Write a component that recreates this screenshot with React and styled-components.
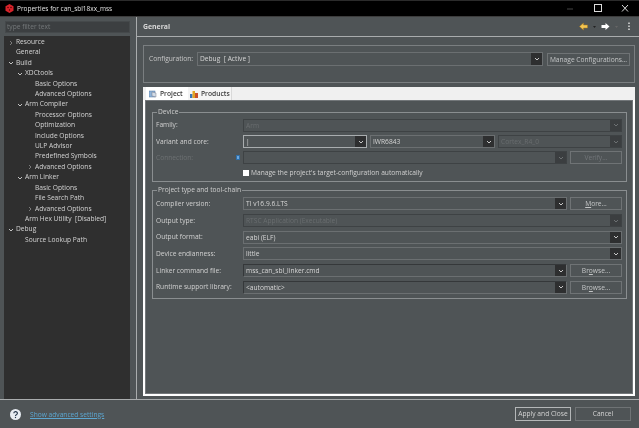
import React from 'react';
import styled, { createGlobalStyle } from 'styled-components';

const Global = createGlobalStyle`
  html, body { margin: 0; padding: 0; background: #4f5456; }
  * { box-sizing: border-box; }
  #root { width: 639px; height: 428px; overflow: hidden; }
`;

const Window = styled.div`
  width: 639px; height: 428px; display: flex; flex-direction: column;
  background: #4f5456; color: #d8d8d8;
  font-family: "Open Sans", "Noto Sans", sans-serif; font-size: 6.65px; letter-spacing: 0;
  overflow: hidden; filter: blur(0.25px);
`;
const TitleBar = styled.div`
  height: 17px; flex: none; background: #000; border-top: 1px solid #2b2b2b;
  border-bottom: 1px solid #3c3c3c;
  display: flex; align-items: center; padding: 0 0 1px 5px; gap: 3px; color: #e2e2e2; font-size: 6.5px;
`;
const TitleText = styled.span` flex: 1; `;
const WinButtons = styled.div` display: flex; align-items: center; gap: 0; `;
const WinButton = styled.svg` width: 27px; height: 9px; display: block; `;
const Main = styled.div` flex: 1; display: flex; min-height: 0; `;
const Sidebar = styled.aside`
  width: 131px; flex: none; display: flex; flex-direction: column; padding: 4px 1px 0 4px; gap: 3px;
`;
const Filter = styled.div`
  height: 12px; flex: none; background: #3c3f41; border: 1px solid #45494b; margin-left: 1px;
  color: #74787a; line-height: 9px; padding-left: 1px;
`;
const Tree = styled.div`
  flex: 1; background: #2f2f2f; padding-top: 1px;
`;
const TreeRow = styled.div`
  height: 10.42px; line-height: 10.42px; padding-left: ${p => p.$indent}px; position: relative; white-space: pre;
  color: #d4d4d4;
`;
const Twist = styled.svg`
  position: absolute; left: ${p => p.$indent - 8.5}px; top: 2.5px; width: 6px; height: 6px;
  fill: none; stroke: ${p => p.$open ? '#c4c4c4' : '#7b7b7b'}; stroke-width: 1;
`;
const Sash = styled.div` width: 6px; flex: none; border-right: 1px solid #a9acad; `;
const Content = styled.main` flex: 1; min-width: 0; display: flex; flex-direction: column; `;
const Header = styled.header`
  height: 20px; flex: none; display: flex; align-items: center; padding: 0 8px 0 6px;
  border-bottom: 1px solid #a9acad; font-weight: 700; font-size: 6.9px; color: #d8d8d8;
`;
const HeaderTitle = styled.span` flex: 1; `;
const NavIcons = styled.div` display: flex; align-items: center; gap: 4px; `;
const NavIcon = styled.svg`
  width: ${p => p.$w || 9}px; height: 9px; display: block; margin-left: ${p => p.$ml || 0}px;
`;
const Body = styled.div`
  flex: 1; min-height: 0; display: flex; flex-direction: column; padding: 8px 4px 3px 6px; gap: 4px;
`;
const ConfigBox = styled.section`
  height: 38px; flex: none; border: 1px solid #7a7e80; display: flex; align-items: flex-start;
  padding: 6px 4px 0 5px; gap: 4px;
`;
const ConfigLabel = styled.span` line-height: 14px; width: 44px; flex: none; white-space: nowrap; color: #c8c8c8; `;
const ConfigCombo = styled.div`
  flex: 1; min-width: 0; height: 14px; display: flex; align-items: stretch; border: 1px solid #6b6f71; color: #d6d6d6;
`;
const ManageButton = styled.div`
  width: 83px; height: 13px; margin-top: 1px; flex: none; border: 1px solid #6f7375;
  text-align: center; line-height: 11px; white-space: nowrap; color: #c4c6c7;
`;
const TabFolder = styled.section`
  flex: 1; min-height: 0; background: #fff; padding: 0 2px 2px 2px; display: flex; flex-direction: column;
`;
const TabStrip = styled.div`
  height: 13px; flex: none; display: flex; background: #f0f0f0; margin: 0 -2px;
  padding-left: 3px;
`;
const Tab = styled.div`
  height: 13px; display: flex; align-items: center; gap: 3px; padding-left: ${p => p.$pad}px;
  background: ${p => p.$active ? '#fff' : '#f4f4f4'}; color: #3a3a3a;
  width: ${p => p.$w}px; font-weight: 600; font-size: 6.7px;
  border-right: 1px solid ${p => p.$active ? '#fff' : '#d9d9d9'};
`;
const TabIcon = styled.svg` width: 8px; height: 8px; flex: none; `;
const TabBody = styled.div`
  flex: 1; min-height: 0; background: #4f5456; border: 1px solid #73777a; padding: 7px 5px 0 6px;
  display: flex; flex-direction: column; gap: 4px;
`;
const Group = styled.fieldset`
  margin: 0; padding: ${p => p.$pt || 1}px 4px 0 3px; border: 1px solid #8a8e90; min-width: 0;
  height: ${p => p.$h}px; display: flex; flex-direction: column; flex: none;
`;
const Legend = styled.legend`
  padding: 0 1px; margin-left: 1px; font-size: 6.65px; line-height: 8px; color: #cfcfcf; white-space: nowrap;
`;
const Row = styled.div`
  height: ${p => p.$h || 16.4}px; flex: none; display: flex; align-items: center; gap: 3px;
`;
const Label = styled.span`
  width: 84px; flex: none; white-space: nowrap; color: ${p => p.$off ? '#6d7173' : '#d0d0d0'}; position: relative; height: 10px; line-height: 10px;
`;
const Marker = styled.i`
  position: absolute; right: 0; top: 2px; width: 4px; height: 5px; background: #6ea6dc;
  border: 1px solid #2f6fa8;
`;
const Combo = styled.div`
  flex: ${p => p.$w ? 'none' : 1}; width: ${p => p.$w ? p.$w + 'px' : 'auto'}; min-width: 0; height: 13px; display: flex; align-items: stretch;
  border: 1px solid ${p => p.$focus ? '#a9adaf' : p.$off ? '#3e4244' : '#6b6f71'};
  ${p => p.$sunken ? 'border-top-color: #35383a; border-left-color: #35383a;' : ''}
  background: #4f5456;
  color: ${p => p.$off ? '#696d6f' : '#d6d6d6'};
`;
const ComboText = styled.span` flex: 1; line-height: 11px; padding-left: 2px; white-space: pre; overflow: hidden; `;
const ComboArrow = styled.span`
  width: 11px; flex: none; background: ${p => p.$off ? '#3b3e40' : '#2e2f30'}; display: flex; align-items: center; justify-content: center;
  svg { width: 6px; height: 6px; fill: none; stroke: ${p => p.$off ? '#6d7173' : '#c8c8c8'}; stroke-width: 1; }
`;
const Button = styled.div`
  width: 52px; height: 13px; flex: none; border: 1px solid #6f7375;
  text-align: center; line-height: 11px; white-space: nowrap; overflow: hidden;
  color: ${p => p.$off ? '#72767a' : '#c4c6c7'};
  u { text-underline-offset: 1px; }
`;
const Check = styled.span` width: 6px; height: 6px; background: #fff; flex: none; margin-left: 87px; `;
const CheckLabel = styled.span` color: #d0d0d0; white-space: nowrap; margin-left: -1px; `;
const Footer = styled.footer`
  height: 29px; flex: none; border-top: 1px solid #a9acad; display: flex; align-items: center; padding: 0 0 0 10px;
`;
const Help = styled.svg` width: 11px; height: 11px; flex: none; margin-right: 9px; `;
const HelpLink = styled.span` flex: 1; color: #5ca6d0; text-decoration: underline; `;
const FooterButton = styled.div`
  width: ${p => p.$w}px; height: 14px; border: 1px solid ${p => p.$strong ? '#b4b7b8' : '#6f7375'}; text-align: center; line-height: 12px;
  color: #d4d4d4; margin-right: ${p => p.$mr}px;
`;

const Chev = () => <svg viewBox="0 0 6 6"><path d="M1 2l2 2 2-2" /></svg>;
const Select = ({ children, w, off, focus, sunken }) => (
  <Combo $w={w} $off={off} $focus={focus} $sunken={sunken}>
    <ComboText>{children}</ComboText>
    <ComboArrow $off={off}><Chev /></ComboArrow>
  </Combo>
);

const tree = [
  ['Resource', 12, 'closed0'],
  ['General', 12],
  ['Build', 12, 'open'],
  ['XDCtools', 21, 'open'],
  ['Basic Options', 31],
  ['Advanced Options', 31],
  ['Arm Compiler', 21, 'open'],
  ['Processor Options', 31],
  ['Optimization', 31],
  ['Include Options', 31],
  ['ULP Advisor', 31],
  ['Predefined Symbols', 31],
  ['Advanced Options', 31, 'closed'],
  ['Arm Linker', 21, 'open'],
  ['Basic Options', 31],
  ['File Search Path', 31],
  ['Advanced Options', 31, 'closed'],
  ['Arm Hex Utility  [Disabled]', 21],
  ['Debug', 12, 'open'],
  ['Source Lookup Path', 21],
];

export default function App() {
  return (
    <Window>
      <Global />
      <TitleBar>
        <svg width="9" height="9" viewBox="0 0 9 9" style={{ flex: 'none' }}>
          <path d="M4.5 0L8.5 2.2V6.8L4.5 9L.5 6.8V2.2Z" fill="#d8232a" />
          <circle cx="3" cy="3.5" r=".7" fill="#400" /><circle cx="6" cy="3.5" r=".7" fill="#400" /><circle cx="4.5" cy="6" r=".7" fill="#400" />
        </svg>
        <TitleText>Properties for can_sbl18xx_mss</TitleText>
        <WinButtons>
          <WinButton viewBox="0 0 27 9"><path d="M9 5h6" stroke="#444" strokeWidth="1" /></WinButton>
          <WinButton viewBox="0 0 27 9"><rect x="9.5" y=".5" width="7" height="7" fill="none" stroke="#ddd" /></WinButton>
          <WinButton viewBox="0 0 27 9"><path d="M10 1l6 6.500M16 1l-6 6.500" stroke="#ddd" fill="none" /></WinButton>
        </WinButtons>
      </TitleBar>
      <Main>
        <Sidebar>
          <Filter>type filter text</Filter>
          <Tree>
            {tree.map(([t, ind, tw], i) => (
              <TreeRow key={i} $indent={ind}>
                {tw && (
                  <Twist $indent={ind} $open={tw === 'open'} viewBox="0 0 6 6">
                    <path d={tw === 'open' ? 'M1 2l2 2 2-2' : 'M2 1l2 2-2 2'} />
                  </Twist>
                )}
                {t}
              </TreeRow>
            ))}
          </Tree>
        </Sidebar>
        <Sash />
        <Content>
          <Header>
            <HeaderTitle>General</HeaderTitle>
            <NavIcons>
              <NavIcon viewBox="0 0 9 9"><path d="M.5 4.500L4.500 1V3H8.500V6H4.500V8Z" fill="#f3c552" stroke="#a9781d" strokeWidth=".5" /></NavIcon>
              <NavIcon $w={5} viewBox="0 0 5 9"><path d="M1 4h3L2.500 6Z" fill="#222" /></NavIcon>
              <NavIcon viewBox="0 0 9 9"><path d="M8.500 4.500L4.500 1V3H.5V6H4.500V8Z" fill="#fff" /></NavIcon>
              <NavIcon $w={5} viewBox="0 0 5 9"><path d="M1 4h3L2.500 6Z" fill="#666" /></NavIcon>
              <NavIcon $w={4} $ml={4} viewBox="0 0 4 9"><path d="M2 .5v1.500M2 3.500v1.500M2 6.500v1.500" stroke="#ddd" strokeWidth="1.500" /></NavIcon>
            </NavIcons>
          </Header>
          <Body>
            <ConfigBox>
              <ConfigLabel>Configuration:</ConfigLabel>
              <ConfigCombo>
                <ComboText>Debug  [ Active ]</ComboText>
                <ComboArrow><Chev /></ComboArrow>
              </ConfigCombo>
              <ManageButton>Manage Configurations...</ManageButton>
            </ConfigBox>
            <TabFolder>
              <TabStrip>
                <Tab $active $w={42} $pad={3}>
                  <TabIcon viewBox="0 0 8 8"><rect x="0" y="1" width="6" height="6" fill="#8fb3d9" stroke="#5679a0" strokeWidth=".5" /><path d="M3 2l4 1v4l-4-1Z" fill="#d3dde8" stroke="#667" strokeWidth=".4" /></TabIcon>
                  Project
                </Tab>
                <Tab $w={44} $pad={2}>
                  <TabIcon viewBox="0 0 8 8"><rect x="0" y="4" width="2.500" height="4" fill="#3a76b8" /><rect x="2.500" y="1" width="2.500" height="7" fill="#e0a526" /><rect x="5" y="3" width="3" height="5" fill="#c8502a" /></TabIcon>
                  Products
                </Tab>
              </TabStrip>
              <TabBody>
                <Group $h={74}>
                  <Legend>Device</Legend>
                  <Row>
                    <Label>Family:</Label>
                    <Select off>Arm</Select>
                  </Row>
                  <Row>
                    <Label>Variant and core:</Label>
                    <Select w={124} focus>|</Select>
                    <Select w={125}>IWR6843</Select>
                    <Select off>Cortex_R4_0</Select>
                  </Row>
                  <Row>
                    <Label $off>Connection:<Marker /></Label>
                    <Select off></Select>
                    <Button $off>Verify...</Button>
                  </Row>
                  <Row $h={13}>
                    <Check />
                    <CheckLabel>Manage the project's target-configuration automatically</CheckLabel>
                  </Row>
                </Group>
                <Group $h={113} $pt={1.5}>
                  <Legend>Project type and tool-chain</Legend>
                  <Row $h={16.7}>
                    <Label>Compiler version:</Label>
                    <Select>TI v16.9.6.LTS</Select>
                    <Button><u>M</u>ore...</Button>
                  </Row>
                  <Row $h={16.7}>
                    <Label>Output type:</Label>
                    <Select off>RTSC Application (Executable)</Select>
                  </Row>
                  <Row $h={16.7}>
                    <Label>Output format:</Label>
                    <Select>eabi (ELF)</Select>
                  </Row>
                  <Row $h={16.7}>
                    <Label>Device endianness:</Label>
                    <Select>little</Select>
                  </Row>
                  <Row $h={16.7}>
                    <Label>Linker command file:</Label>
                    <Select sunken>mss_can_sbl_linker.cmd</Select>
                    <Button>Br<u>o</u>wse...</Button>
                  </Row>
                  <Row $h={16.7}>
                    <Label>Runtime support library:</Label>
                    <Select sunken>&lt;automatic&gt;</Select>
                    <Button>Br<u>o</u>wse...</Button>
                  </Row>
                </Group>
              </TabBody>
            </TabFolder>
          </Body>
        </Content>
      </Main>
      <Footer>
        <Help viewBox="0 0 11 11">
          <circle cx="5.500" cy="5.500" r="5.500" fill="#e8edf3" />
          <path d="M3.800 4.200a1.800 1.600 0 1 1 2.600 1.500c-.6.300-.9.600-.9 1.200" fill="none" stroke="#27384d" strokeWidth="1.200" />
          <circle cx="5.500" cy="8.500" r=".7" fill="#27384d" />
        </Help>
        <HelpLink>Show advanced settings</HelpLink>
        <FooterButton $strong $w={56} $mr={4}>Apply and Close</FooterButton>
        <FooterButton $w={56} $mr={8}>Cancel</FooterButton>
      </Footer>
    </Window>
  );
}
